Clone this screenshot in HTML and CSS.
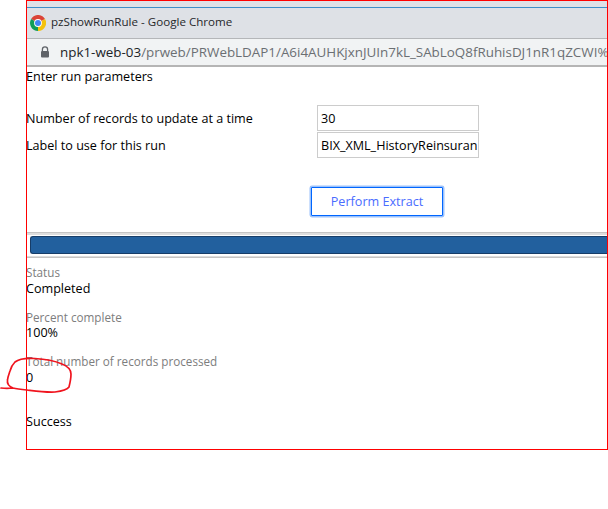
FILE: index.html
```html
<!DOCTYPE html>
<html lang="en">
<head>
<meta charset="utf-8">
<title>pzShowRunRule - Google Chrome</title>
<link rel="stylesheet" href="styles.css">
</head>
<body>
<div class="window">
  <div class="topstrip"></div>
  <div class="titlebar">
    <svg class="chrome-logo" viewBox="0 0 16 16" width="16" height="16" aria-hidden="true">
      <path d="M8 8 L1.1 4 A8 8 0 0 1 15 4 Z" fill="#db4437"/>
      <path d="M8 8 L15 4 A8 8 0 0 1 8 16 Z" fill="#f4c20d"/>
      <path d="M8 8 L8 16 A8 8 0 0 1 1.1 4 Z" fill="#0f9d58"/>
      <circle cx="8" cy="8" r="3.9" fill="#fff"/>
      <circle cx="8" cy="8" r="3" fill="#4285f4"/>
    </svg>
    <span class="title-text">pzShowRunRule - Google Chrome</span>
  </div>
  <div class="addressbar">
    <svg class="lock" viewBox="0 0 10 12" width="10" height="12" aria-hidden="true">
      <path d="M2.4 5V3.4a2.6 2.6 0 0 1 5.2 0V5" fill="none" stroke="#5f6368" stroke-width="1.3"/>
      <rect x="1" y="5" width="8" height="6.5" rx="1" fill="#5f6368"/>
    </svg>
    <span class="url"><span class="host">npk1-web-03</span>/prweb/PRWebLDAP1/A6i4AUHKjxnJUIn7kL_SAbLoQ8fRuhisDJ1nR1qZCWI%</span>
  </div>
  <main class="content">
    <div class="heading">Enter run parameters</div>
    <form class="params">
      <label class="param-label" for="batch">Number of records to update at a time</label>
      <input class="param-input" id="batch" value="30">
      <label class="param-label" for="runlabel">Label to use for this run</label>
      <input class="param-input" id="runlabel" value="BIX_XML_HistoryReinsurance">
    </form>
    <div class="actions"><button class="extract" type="button">Perform Extract</button></div>
    <div class="progress"><div class="progress-fill"></div></div>
    <dl class="results">
      <dt>Status</dt><dd>Completed</dd>
      <dt>Percent complete</dt><dd>100%</dd>
      <dt>Total number of records processed</dt><dd>0</dd>
    </dl>
    <div class="outcome">Success</div>
  </main>
</div>
<svg class="scribble" viewBox="0 0 80 60" width="80" height="60" aria-hidden="true">
  <path d="M1 43 C5 43.5 9 43.5 13 43 C8 41 7 38 7.5 35 C8 31 9 29 10 26 C11 22 12 20 15 17 C20 13 27 13 35 13.5 C45 14 55 16 62 19 C67 21 71 24 71 29 C71 34 70 38 69 42 C67 45 63 46 55 47 C45 47.5 35 46 27 45 C22 44.5 17 44 13 43" fill="none" stroke="#f0141e" stroke-width="1.7" stroke-linecap="round" stroke-linejoin="round"/>
</svg>
</body>
</html>
```

FILE: styles.css
```css
html, body {
  margin: 0;
  padding: 0;
  background: #fff;
}
body {
  position: relative;
  width: 608px;
  height: 509px;
  overflow: hidden;
  font-family: "Open Sans", "Liberation Sans", sans-serif;
  font-size: 12.6px;
  color: #000;
}
.window {
  box-sizing: border-box;
  width: 582px;
  height: 450px;
  margin-left: 26px;
  border: 1px solid #f00;
  overflow: hidden;
}
.topstrip {
  height: 6px;
  background: #dee1e6;
  border-bottom: 1px solid #3d8fc9;
}
.titlebar {
  display: flex;
  align-items: center;
  gap: 5px;
  height: 30px;
  padding-left: 3px;
  background: #dee1e6;
  border-bottom: 1px solid #b4b6b9;
}
.chrome-logo {
  flex: none;
  margin-bottom: 1px;
}
.title-text {
  font-size: 11.6px;
  line-height: 16px;
  margin-bottom: 3px;
  color: #26282b;
}
.addressbar {
  display: flex;
  align-items: center;
  gap: 10px;
  height: 26px;
  padding-left: 13px;
  background: #f1f3f4;
  border-bottom: 2px solid #b5b5b5;
  white-space: nowrap;
  overflow: hidden;
}
.lock { flex: none; }
.url {
  font-size: 13.4px;
  color: #6b6f73;
}
.host { color: #202327; }
.content {
  padding-top: 1px;
  margin-left: -1px;
}
.heading { line-height: 18px; }
.params {
  display: grid;
  grid-template-columns: 291px 162px;
  row-gap: 1px;
  margin-top: 19px;
  align-items: center;
}
.param-label {
  padding-top: 2px;
  line-height: 18px;
}
.param-input {
  box-sizing: border-box;
  width: 162px;
  height: 26px;
  padding: 0 1px 0 3px;
  border: 1px solid #ccc;
  border-radius: 0;
  background: #fff;
  font: inherit;
  color: #000;
  outline: none;
}
.actions {
  display: flex;
  padding: 29px 0 0 285px;
}
.extract {
  box-sizing: border-box;
  width: 132px;
  height: 29px;
  padding: 0;
  border: 1px solid #0066ff;
  border-radius: 1px;
  box-shadow: 0 0 0 1.5px #9cc2fb;
  background: #fff;
  font: inherit;
  color: #4a6cff;
}
.progress {
  margin-top: 16px;
  margin-left: 1px;
  padding: 3px 0 3px 3px;
  background: #fff;
  border-top: 1px solid #c4c4c4;
  border-bottom: 1px solid #c4c4c4;
  box-shadow: inset 0 2px 0 #ddd, inset 0 -1px 0 #ddd;
}
.progress-fill {
  box-sizing: border-box;
  height: 18px;
  background: #22609e;
  border: 1px solid #173d68;
  border-right: 0;
  border-radius: 3px 0 0 3px;
}
.results {
  margin: 6px 0 0;
}
.results dt {
  font-size: 11.7px;
  line-height: 16.2px;
  color: #7d7d7d;
}
.results dd {
  margin: 0 0 11.8px;
  padding-top: 0.6px;
  line-height: 16px;
}
.outcome {
  margin-top: 27.8px;
  line-height: 16px;
}
.scribble {
  position: absolute;
  left: 0;
  top: 345px;
}
```
